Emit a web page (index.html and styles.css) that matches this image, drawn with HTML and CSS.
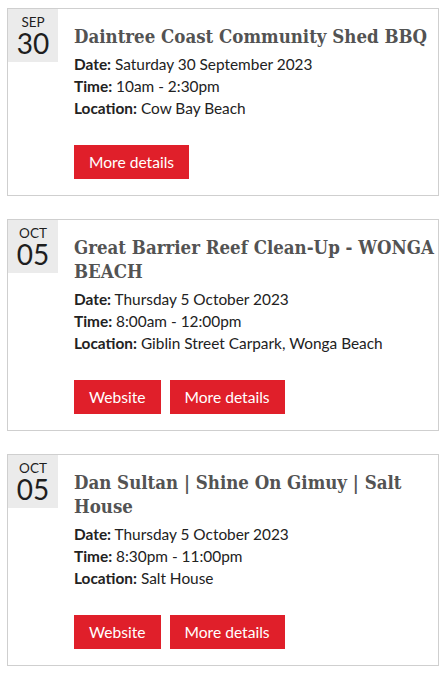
FILE: index.html
```html
<!DOCTYPE html>
<html lang="en">
<head>
<meta charset="utf-8">
<title>Events</title>
<link rel="stylesheet" href="styles.css">
</head>
<body>
<div class="events">
  <article class="event">
    <div class="date-box"><span class="month">SEP</span><span class="day">30</span></div>
    <div class="event-body">
      <h2 class="event-title">Daintree Coast Community Shed BBQ</h2>
      <p class="event-line"><strong>Date:</strong> Saturday 30 September 2023</p>
      <p class="event-line"><strong>Time:</strong> 10am - 2:30pm</p>
      <p class="event-line"><strong>Location:</strong> Cow Bay Beach</p>
      <div class="actions"><a class="btn" href="#">More details</a></div>
    </div>
  </article>
  <article class="event">
    <div class="date-box"><span class="month">OCT</span><span class="day">05</span></div>
    <div class="event-body">
      <h2 class="event-title">Great Barrier Reef Clean-Up - WONGA BEACH</h2>
      <p class="event-line"><strong>Date:</strong> Thursday 5 October 2023</p>
      <p class="event-line"><strong>Time:</strong> 8:00am - 12:00pm</p>
      <p class="event-line"><strong>Location:</strong> Giblin Street Carpark, Wonga Beach</p>
      <div class="actions"><a class="btn" href="#">Website</a><a class="btn" href="#">More details</a></div>
    </div>
  </article>
  <article class="event">
    <div class="date-box"><span class="month">OCT</span><span class="day">05</span></div>
    <div class="event-body">
      <h2 class="event-title">Dan Sultan | Shine On Gimuy | Salt House</h2>
      <p class="event-line"><strong>Date:</strong> Thursday 5 October 2023</p>
      <p class="event-line"><strong>Time:</strong> 8:30pm - 11:00pm</p>
      <p class="event-line"><strong>Location:</strong> Salt House</p>
      <div class="actions"><a class="btn" href="#">Website</a><a class="btn" href="#">More details</a></div>
    </div>
  </article>
</div>
</body>
</html>
```
FILE: styles.css
```css
html, body {
  margin: 0;
  padding: 0;
  background: #fff;
}
body {
  font-family: Lato, "Open Sans", sans-serif;
  color: #222;
}
.events {
  padding: 8px 9px 0 7px;
  display: flex;
  flex-direction: column;
  gap: 23px;
}
.event {
  display: flex;
  align-items: flex-start;
  border: 1px solid #cfcfcf;
}
.date-box {
  flex: 0 0 50px;
  width: 50px;
  box-sizing: border-box;
  height: 53px;
  padding-top: 6px;
  background: #ebebeb;
  display: flex;
  flex-direction: column;
  align-items: center;
  color: #1e1e1e;
}
.month {
  font-size: 13.5px;
  line-height: 14px;
}
.day {
  font-size: 28px;
  line-height: 28px;
}
.event-body {
  flex: 1;
  padding: 16px 4px 16px 16px;
}
.event-title {
  margin: 0 0 4px;
  font-family: "DejaVu Serif Condensed", "DejaVu Serif", serif;
  font-weight: bold;
  font-size: 18.5px;
  line-height: 24px;
  color: #535353;
}
.event-line {
  margin: 0;
  font-size: 15.4px;
  line-height: 22px;
}
.event-line strong {
  font-weight: bold;
}
.actions {
  margin-top: 26px;
  display: flex;
  gap: 9px;
}
.btn {
  display: block;
  height: 34px;
  line-height: 34px;
  padding: 0 15px;
  background: #e01f2a;
  color: #fff;
  font-size: 15.6px;
  text-decoration: none;
}
```
